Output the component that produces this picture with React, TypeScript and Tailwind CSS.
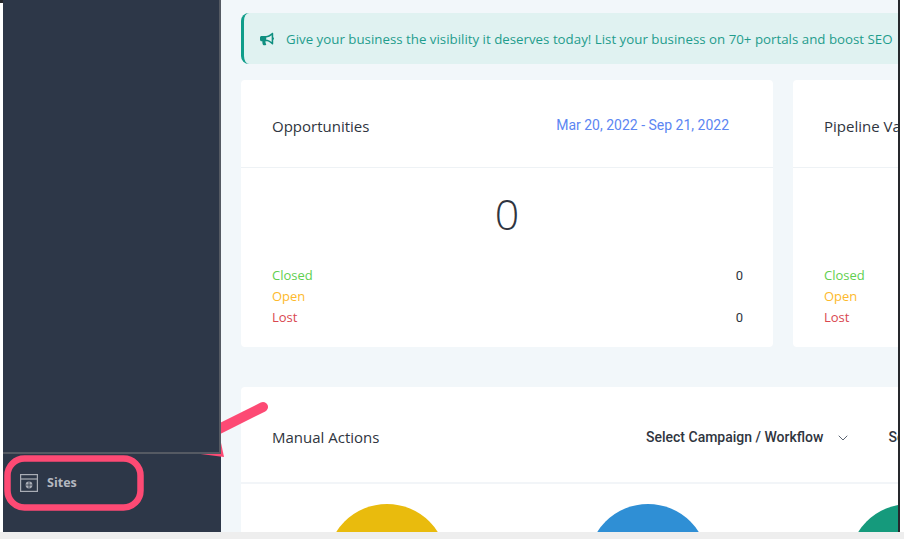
import { ChevronDown } from "lucide-react";
import { FaBullhorn } from "react-icons/fa";

const statuses = [
  { label: "Closed", color: "text-[#5fcf50]", value: "0" },
  { label: "Open", color: "text-[#fdb92c]", value: "" },
  { label: "Lost", color: "text-[#d9474f]", value: "0" },
];

function StatCard({ title, date, width }: { title: string; date?: string; width: string }) {
  return (
    <div className={`${width} h-[267px] shrink-0 rounded-[4px] bg-white`}>
      <div className="flex h-[88px] items-center justify-between border-b border-[#eef2f5] pt-[6px] pl-[31px] pr-[44px]">
        <span className="whitespace-nowrap text-[15px] text-[#2f3540]">{title}</span>
        {date && <span className="pb-[2px] font-['Roboto',sans-serif] text-[14px] text-[#5c86f2]">{date}</span>}
      </div>
      <div className="pt-[20px] text-center text-[43px] leading-[52px] font-light text-[#2f3540]">0</div>
      <div className="mt-[25px] flex flex-col pl-[31px] pr-[30px] text-[13px] leading-[21px]">
        {statuses.map((s) => (
          <div key={s.label} className="flex h-[21px] justify-between">
            <span className={s.color}>{s.label}</span>
            <span className="font-['Roboto',sans-serif] text-[#2f3540]">{s.value}</span>
          </div>
        ))}
      </div>
    </div>
  );
}

export default function App() {
  return (
    <div className="flex h-[539px] w-[904px] flex-col overflow-hidden bg-[#eeeeee] font-['Open_Sans',sans-serif]">
      <div className="flex h-[532px] shrink-0 bg-white">
        <aside className="relative ml-[3px] flex w-[218px] shrink-0 flex-col justify-end bg-[#2d3748]">
          <div className="mb-[40px] flex h-[18px] items-center gap-[9px] pl-[17px]">
            <svg width="18" height="18" viewBox="0 0 18 18" fill="none" stroke="#a9adb6" strokeWidth="1.2">
              <rect x="0.6" y="0.6" width="16.8" height="16.8" />
              <path d="M0.6 5h16.8" />
              <circle cx="9" cy="11" r="3.4" fill="#a9adb6" stroke="none" />
              <path d="M5.6 11h6.8M9 7.6v6.8" stroke="#2d3748" strokeWidth="0.8" />
            </svg>
            <span className="text-[12.5px] font-bold text-[#b4b8c0]">Sites</span>
          </div>
        </aside>

        <main className="relative min-w-0 flex-1 overflow-hidden bg-[#f2f7fa] pt-[13px] pl-[20px]">
          <div className="flex h-[51px] w-[700px] items-center gap-[12px] rounded-l-[8px] border-l-[3px] border-[#0f9d8a] bg-[#e0f2f1] pl-[16px] text-[13.3px] whitespace-nowrap text-[#1f9d8d]">
            <FaBullhorn size={14} className="shrink-0 text-[#0f8f80]" />
            <span className="pt-[2px]">Give your business the visibility it deserves today! List your business on 70+ portals and boost SEO</span>
          </div>

          <div className="mt-[16px] flex gap-[20px]">
            <StatCard title="Opportunities" date="Mar 20, 2022 - Sep 21, 2022" width="w-[532px]" />
            <StatCard title="Pipeline Value" width="w-[400px]" />
          </div>

          <div className="mt-[40px] h-[200px] w-[800px] rounded-[4px] bg-white">
            <div className="flex h-[97px] items-center border-b-2 border-[#f2f5f8] pt-[6px] pl-[31px]">
              <span className="w-[374px] shrink-0 text-[15px] text-[#2f3540]">Manual Actions</span>
              <span className="font-['Roboto',sans-serif] text-[14px] font-medium whitespace-nowrap text-[#2f3540]">Select Campaign / Workflow</span>
              <ChevronDown size={16} strokeWidth={1.5} className="ml-[12px] shrink-0 text-[#5b6472]" />
              <span className="ml-[37px] font-['Roboto',sans-serif] text-[14px] font-medium whitespace-nowrap text-[#2f3540]">Select</span>
            </div>
            <div className="flex gap-[141px] pt-[20px] pl-[86px]">
              <div className="h-[120px] w-[120px] shrink-0 rounded-full bg-[#e9bb0d]" />
              <div className="h-[120px] w-[120px] shrink-0 rounded-full bg-[#2f8fd5]" />
              <div className="h-[120px] w-[120px] shrink-0 rounded-full bg-[#159a7c]" />
            </div>
          </div>
        </main>

        <div className="w-[6px] shrink-0 border-l-2 border-[#26282c] bg-white" />
      </div>

      {/* annotation drawn over the screenshot */}
      <svg className="pointer-events-none absolute top-0 left-0 z-10" width="904" height="539" fill="none">
        <path d="M215 431L263 407" stroke="#fd4a74" strokeWidth="10" strokeLinecap="round" />
        <path d="M185 452L224 457L220 438Z" fill="#fd4a74" />
        <rect x="7.5" y="458.5" width="133" height="49" rx="17" stroke="#fd4a74" strokeWidth="6.5" />
      </svg>

      {/* pasted panel that sits on top of the arrow */}
      <div className="absolute top-0 left-[3px] z-20 h-[454px] w-[218px] border-r-2 border-b-2 border-[#555a63] bg-[#2d3748]" />
      <div className="absolute top-0 left-0 z-20 h-[3px] w-[3px] bg-[#26282c]" />
    </div>
  );
}
